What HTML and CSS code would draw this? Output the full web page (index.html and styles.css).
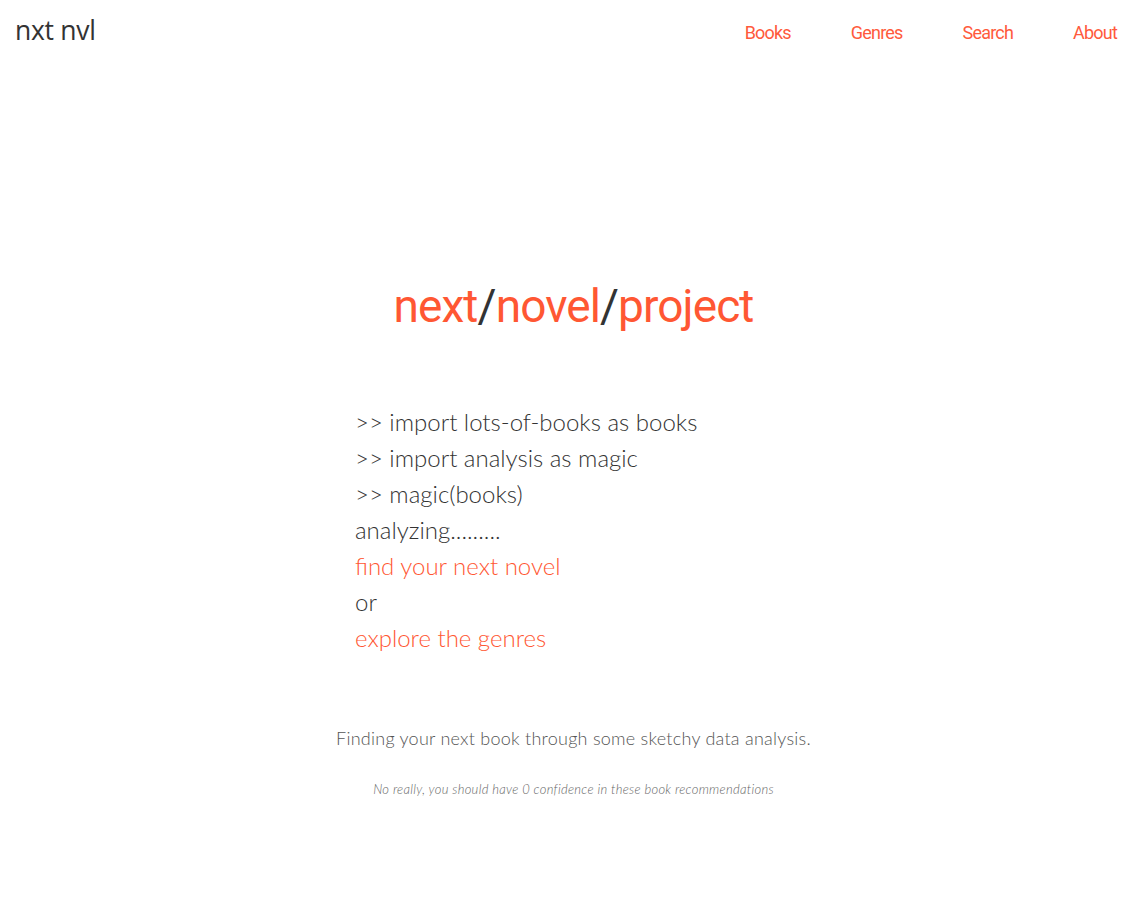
FILE: index.html
```html
<!DOCTYPE html>
<html lang="en">
<head>
<meta charset="utf-8">
<title>nxt nvl</title>
<link rel="stylesheet" href="styles.css">
</head>
<body>
<header class="topbar">
  <a class="brand" href="#">nxt nvl</a>
  <nav class="nav">
    <a href="#">Books</a>
    <a href="#">Genres</a>
    <a href="#">Search</a>
    <a href="#">About</a>
  </nav>
</header>
<main class="hero">
  <h1 class="title"><span class="hl">next</span>/<span class="hl">novel</span>/<span class="hl">project</span></h1>
  <div class="code">
    <div class="line">&gt;&gt; import lots-of-books as books</div>
    <div class="line">&gt;&gt; import analysis as magic</div>
    <div class="line">&gt;&gt; magic(books)</div>
    <div class="line">analyzing.........</div>
    <div class="line"><a class="link" href="#">find your next novel</a></div>
    <div class="line">or</div>
    <div class="line"><a class="link" href="#">explore the genres</a></div>
  </div>
  <p class="tagline">Finding your next book through some sketchy data analysis.</p>
  <p class="fine">No really, you should have 0 confidence in these book recommendations</p>
</main>
</body>
</html>
```
FILE: styles.css
```css
* { box-sizing: border-box; }
html, body { margin: 0; padding: 0; background: #fff; }
body { font-family: "Lato", "Open Sans", sans-serif; color: #333; }
a { text-decoration: none; }

.topbar {
  display: flex;
  align-items: center;
  justify-content: space-between;
  height: 62px;
  padding: 0 0 0 15px;
}
.brand {
  font-family: "Open Sans", sans-serif;
  font-size: 26.5px;
  color: #333;
  letter-spacing: -0.3px;
  line-height: 1;
  padding-bottom: 2px;
}
.nav { display: flex; padding-top: 3px; }
.nav a {
  font-family: "Roboto", sans-serif;
  font-size: 18px;
  color: #ff5a3c;
  padding: 0 30px;
  letter-spacing: -0.8px;
  line-height: 1;
}

.hero {
  display: flex;
  flex-direction: column;
  align-items: center;
}
.title {
  margin: 216px 0 0;
  font-family: "Roboto", sans-serif;
  font-weight: 400;
  font-size: 46px;
  letter-spacing: -0.9px;
  line-height: 56px;
  color: #333;
}
.title .hl { color: #ff5733; }

.code {
  align-self: stretch;
  padding-left: 355px;
  margin-top: 70px;
  font-family: "Lato", sans-serif;
  font-weight: 300;
  font-size: 24px;
  color: #333;
}
.line { line-height: 36px; height: 36px; }
.link { color: #ff5733; }

.tagline {
  margin: 70px 0 0;
  font-family: "Lato", sans-serif;
  font-weight: 300;
  font-size: 18px;
  letter-spacing: 0.25px;
  color: #555;
  line-height: 24px;
}
.fine {
  margin: 30px 0 0;
  font-family: "Lato", sans-serif;
  font-weight: 300;
  font-style: italic;
  font-size: 13px;
  letter-spacing: 0.3px;
  line-height: 18px;
  color: #666;
}
```
